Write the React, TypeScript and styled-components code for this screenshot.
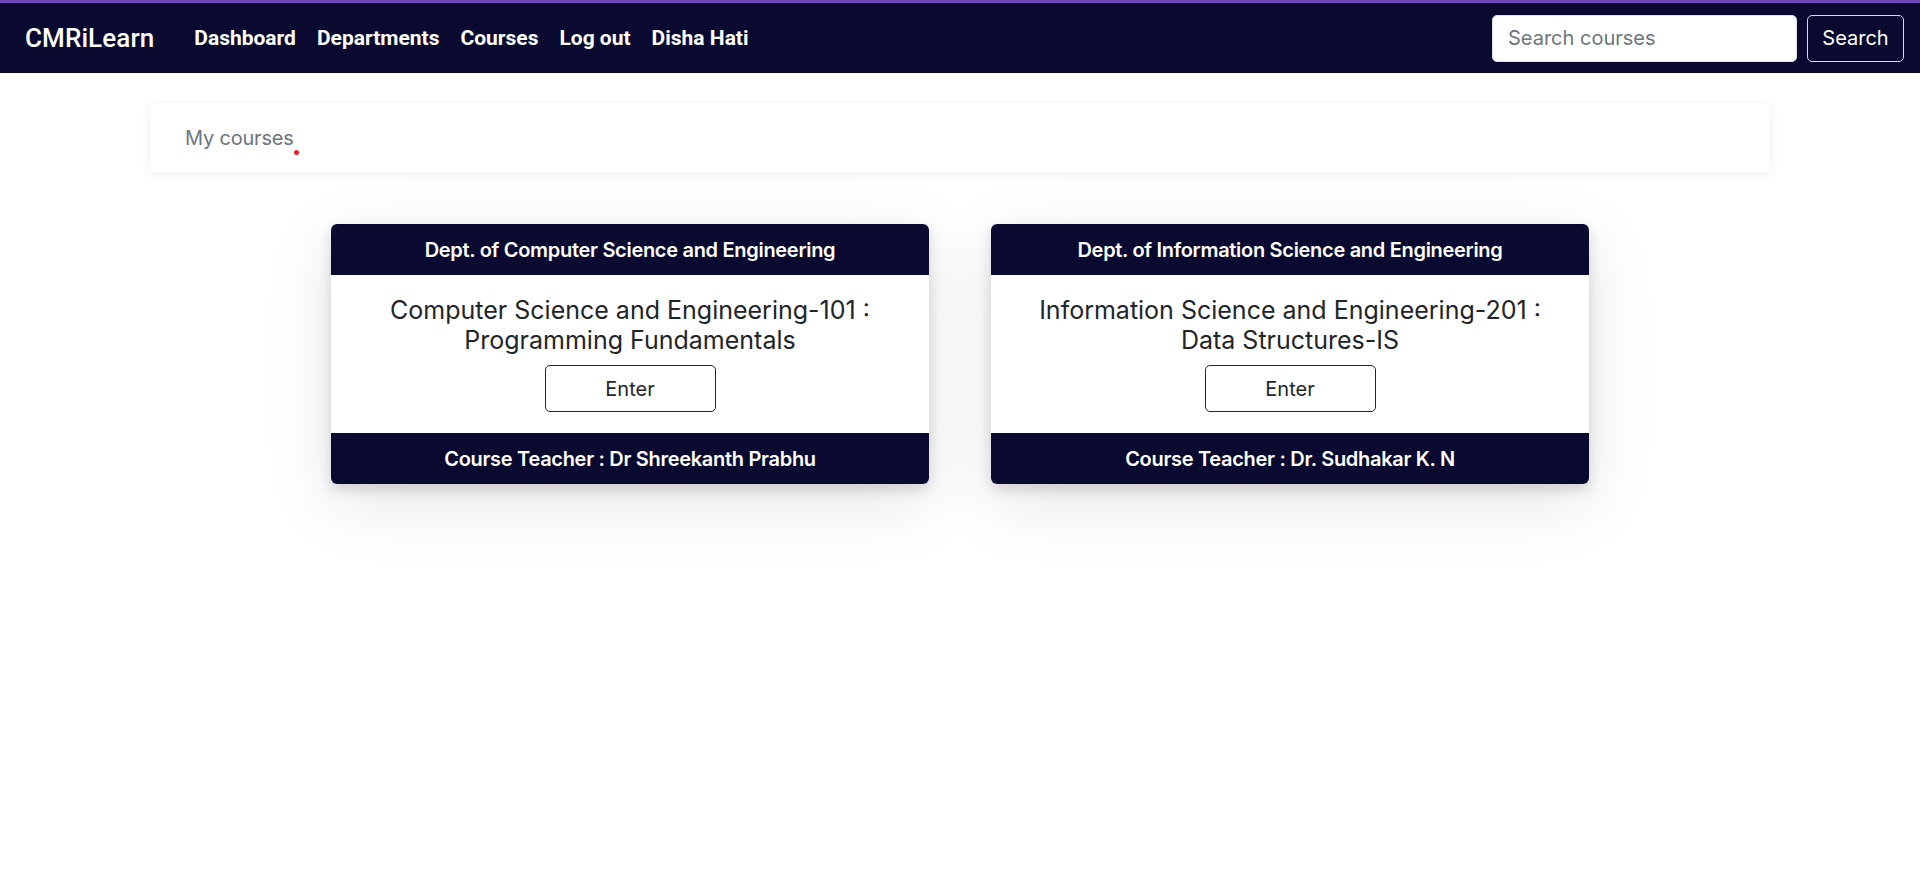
import React from 'react';
import styled, { createGlobalStyle } from 'styled-components';

const GlobalStyle = createGlobalStyle`
  html, body {
    margin: 0;
    padding: 0;
    background: #ffffff;
  }
  body {
    min-height: 100vh;
    font-family: Inter, "Noto Sans", "Liberation Sans", sans-serif;
    color: #212529;
  }
  * {
    box-sizing: border-box;
  }
`;

const NAVY = '#0a0a30';

interface Course {
  id: number;
  department: string;
  code: string;
  name: string;
  teacher: string;
}

const courses: Course[] = [
  {
    id: 1,
    department: 'Dept. of Computer Science and Engineering',
    code: 'Computer Science and Engineering-101',
    name: 'Programming Fundamentals',
    teacher: 'Dr Shreekanth Prabhu',
  },
  {
    id: 2,
    department: 'Dept. of Information Science and Engineering',
    code: 'Information Science and Engineering-201',
    name: 'Data Structures-IS',
    teacher: 'Dr. Sudhakar K. N',
  },
];

const navLinks = ['Dashboard', 'Departments', 'Courses', 'Log out', 'Disha Hati'];

const Navbar = styled.nav`
  display: flex;
  align-items: center;
  height: 73px;
  border-top: 3px solid #7048b8;
  background: ${NAVY};
  padding: 0 16px 0 25px;
`;

const Brand = styled.a`
  font-family: Roboto, "Liberation Sans", sans-serif;
  font-size: 26px;
  font-weight: 500;
  color: #ffffff;
  text-decoration: none;
  margin-right: 40px;
  letter-spacing: 0.1px;
`;

const NavList = styled.ul`
  display: flex;
  align-items: center;
  gap: 21px;
  list-style: none;
  margin: 0;
  padding: 0;
  flex: 1;
`;

const NavLink = styled.a`
  font-family: Roboto, "Liberation Sans", sans-serif;
  font-size: 21px;
  font-weight: 700;
  color: #ffffff;
  text-decoration: none;
`;

const SearchForm = styled.form`
  display: flex;
  align-items: center;
  gap: 10px;
`;

const SearchInput = styled.input`
  width: 305px;
  height: 47px;
  border: 1px solid #dee2e6;
  border-radius: 5px;
  padding: 0 15px;
  font-family: Inter, "Liberation Sans", sans-serif;
  font-size: 20px;
  color: #212529;
  outline: none;

  &::placeholder {
    color: #6c757d;
  }
`;

const SearchButton = styled.button`
  width: 97px;
  height: 47px;
  background: transparent;
  border: 1px solid #d8d8e0;
  border-radius: 5px;
  color: #ffffff;
  font-family: Inter, "Liberation Sans", sans-serif;
  font-size: 20px;
  cursor: pointer;
`;

const Main = styled.main`
  width: 1620px;
  margin: 30px auto 0;
  padding-bottom: 120px;
`;

const Breadcrumb = styled.div`
  position: relative;
  display: flex;
  align-items: center;
  height: 69px;
  padding: 0 35px;
  background: #ffffff;
  box-shadow: 0 2px 10px rgba(0, 0, 0, 0.07);
`;

const Crumb = styled.span`
  font-size: 20px;
  color: #6c757d;
  letter-spacing: -0.2px;
`;

const CursorDot = styled.span`
  position: absolute;
  left: 144px;
  top: 47px;
  width: 5px;
  height: 5px;
  border-radius: 50%;
  background: #ee1c24;
`;

const CardRow = styled.div`
  display: flex;
  justify-content: center;
  gap: 62px;
  margin-top: 52px;
`;

const Card = styled.div`
  width: 598px;
  border-radius: 6px;
  overflow: hidden;
  background: #ffffff;
  box-shadow: 0 6px 14px rgba(0, 0, 0, 0.14), 0 18px 70px rgba(0, 0, 0, 0.1);
`;

const CardBand = styled.div`
  height: 51px;
  display: flex;
  align-items: center;
  justify-content: center;
  background: ${NAVY};
  color: #ffffff;
  font-size: 20px;
  font-weight: 600;
  letter-spacing: -0.3px;
`;

const CardBody = styled.div`
  display: flex;
  flex-direction: column;
  align-items: center;
  padding: 20px 20px 21px;
`;

const CourseTitle = styled.h5`
  margin: 0 0 10px;
  font-size: 25px;
  font-weight: 400;
  line-height: 30px;
  text-align: center;
  color: #212529;
`;

const EnterButton = styled.button`
  width: 171px;
  height: 47px;
  background: #ffffff;
  border: 1px solid #212529;
  border-radius: 5px;
  font-family: Inter, "Liberation Sans", sans-serif;
  font-size: 20px;
  color: #212529;
  cursor: pointer;
`;

const CourseCard: React.FC<{ course: Course }> = ({ course }) => (
  <Card>
    <CardBand>{course.department}</CardBand>
    <CardBody>
      <CourseTitle>
        {course.code} :<br />
        {course.name}
      </CourseTitle>
      <EnterButton>Enter</EnterButton>
    </CardBody>
    <CardBand>Course Teacher : {course.teacher}</CardBand>
  </Card>
);

const App: React.FC = () => (
  <>
    <GlobalStyle />
    <Navbar>
      <Brand href="#">CMRiLearn</Brand>
      <NavList>
        {navLinks.map(link => (
          <li key={link}>
            <NavLink href="#">{link}</NavLink>
          </li>
        ))}
      </NavList>
      <SearchForm onSubmit={e => e.preventDefault()}>
        <SearchInput placeholder="Search courses" />
        <SearchButton type="submit">Search</SearchButton>
      </SearchForm>
    </Navbar>
    <Main>
      <Breadcrumb>
        <Crumb>My courses</Crumb>
        <CursorDot />
      </Breadcrumb>
      <CardRow>
        {courses.map(course => (
          <CourseCard key={course.id} course={course} />
        ))}
      </CardRow>
    </Main>
  </>
);

export default App;
